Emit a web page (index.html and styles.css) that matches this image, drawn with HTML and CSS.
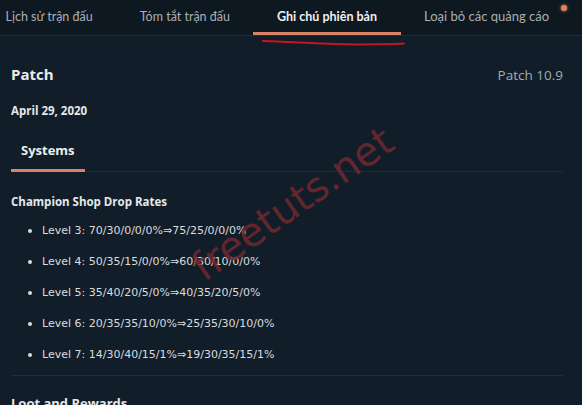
FILE: index.html
```html
<!DOCTYPE html>
<html lang="vi">
<head>
<meta charset="utf-8">
<link rel="stylesheet" href="styles.css">
</head>
<body>
<div class="app">
  <nav class="tabs">
    <div class="tab">Lịch sử trận đấu</div>
    <div class="tab">Tóm tắt trận đấu</div>
    <div class="tab active">Ghi chú phiên bản</div>
    <div class="tab">Loại bỏ các quảng cáo</div>
  </nav>
  <span class="dot"></span>
  <svg class="scribble" width="150" height="8" viewBox="0 0 150 8"><path d="M2 2 C 40 3, 70 6, 100 5.5 S 135 5, 143 4.5" fill="none" stroke="#c8161e" stroke-width="2" stroke-linecap="round"/></svg>
  <main class="content">
    <div class="head">
      <h1 class="title">Patch</h1>
      <span class="version">Patch 10.9</span>
    </div>
    <div class="date">April 29, 2020</div>
    <div class="subtabs"><div class="subtab">Systems</div></div>
    <h2 class="section">Champion Shop Drop Rates</h2>
    <ul class="list">
      <li>Level 3: 70/30/0/0/0%⇒75/25/0/0/0%</li>
      <li>Level 4: 50/35/15/0/0%⇒60/30/10/0/0%</li>
      <li>Level 5: 35/40/20/5/0%⇒40/35/20/5/0%</li>
      <li>Level 6: 20/35/35/10/0%⇒25/35/30/10/0%</li>
      <li>Level 7: 14/30/40/15/1%⇒19/30/35/15/1%</li>
    </ul>
    <h2 class="section next">Loot and Rewards</h2>
  </main>
  <div class="watermark">freetuts.net</div>
</div>
</body>
</html>
```
FILE: styles.css
```css
* { box-sizing: border-box; }
html, body { margin: 0; padding: 0; }
body {
  width: 582px; height: 405px; overflow: hidden;
  background: #111e29;
  font-family: "Open Sans", "Noto Sans", sans-serif;
  color: #e6e8e9;
}
.app { position: relative; width: 582px; height: 405px; overflow: hidden; }
.tabs {
  display: flex; height: 36px;
  background: #0e1820;
  border-bottom: 1px solid #1f2d37;
  margin-left: -18px;
  width: 600px;
  font-family: Lato, sans-serif;
}
.tab {
  padding: 0 23.5px; height: 35px;
  display: flex; align-items: center;
  font-size: 12.5px; color: #a9b0b4;
  white-space: nowrap;
  padding-bottom: 3px;
}
.tab:last-child { font-size: 13px; }
.tab.active {
  color: #f0f0f0; font-weight: 700;
  border-bottom: 3px solid #d98366;
  padding-bottom: 0;
}
.dot {
  position: absolute; left: 561px; top: 5px;
  width: 6px; height: 6px; border-radius: 50%;
  background: #e0845c; box-shadow: 0 0 3px #e08a5f;
}
.scribble { position: absolute; left: 261px; top: 39px; }
.content { padding: 0 19px 0 11px; }
.head {
  display: flex; justify-content: space-between; align-items: baseline;
  margin-top: 28px;
}
.title { margin: 0; font-size: 15px; font-weight: 700; color: #e9ebec; line-height: 20px; }
.version { font-size: 13.5px; color: #a3abb0; }
.date { margin-top: 19px; font-size: 11.5px; font-weight: 700; color: #e6e8e9; }
.subtabs { margin-top: 23px; border-bottom: 1px solid #1f2e38; display: flex; }
.subtab {
  padding: 0 10px 10px; font-size: 13px; font-weight: 700; color: #eceeef;
  border-bottom: 3px solid #d98366; margin-bottom: -1px;
  width: 74px;
}
.section { margin: 22px 0 0; font-size: 11.5px; font-weight: 700; color: #e6e8e9; }
.list {
  margin: 14px 0 0; padding: 0 0 12px 31px; list-style: none;
  border-bottom: 1px solid #1f2e38;
  font-family: "DejaVu Sans", sans-serif;
}
.list li {
  position: relative; font-size: 11px; color: #d9dcde;
  line-height: 16px; margin-bottom: 15px;
}
.list li:last-child { margin-bottom: 0; }
.list li::before {
  content: ""; position: absolute; left: -14px; top: 6px;
  width: 4px; height: 4px; border-radius: 50%; background: #d9dcde;
}
.next { margin-top: 18px; font-size: 13px; }
.watermark {
  position: absolute; left: 183px; top: 252px;
  font-family: "DejaVu Sans", sans-serif; font-size: 40px;
  color: rgba(115, 40, 46, 0.85);
  transform: rotate(-35deg); transform-origin: left top;
  white-space: nowrap;
}
```
